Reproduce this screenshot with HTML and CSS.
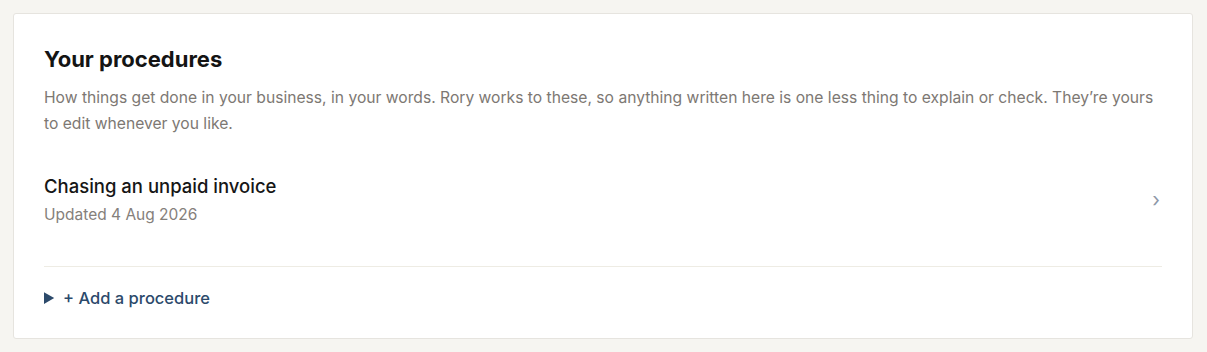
FILE: index.html
```html
<!DOCTYPE html>
<html lang="en">
<head>
  <meta charset="UTF-8">
  <title>Your procedures</title>
  <link rel="stylesheet" href="styles.css">
</head>
<body>

  <!-- Procedures card -->
  <section class="card">
    <h2>Your procedures</h2>
    <p class="intro">How things get done in your business, in your words. Rory works to these, so anything written here is one less thing to explain or check. They’re yours to edit whenever you like.</p>

    <a class="procedure" href="#">
      <div>
        <h3>Chasing an unpaid invoice</h3>
        <p>Updated 4 Aug 2026</p>
      </div>
      <span class="chevron">›</span>
    </a>

    <details class="add-procedure">
      <summary>+ Add a procedure</summary>
    </details>
  </section>

</body>
</html>
```

FILE: styles.css
```css
body {
  margin: 0;
  padding: 13px 14px 13px 13px;
  font-family: Inter, 'Noto Sans', sans-serif;
  background-color: #f6f5f1;
  color: #1a1a1a;
}

.card {
  background-color: #fff;
  border: 1px solid #e6e4df;
  border-radius: 3px;
  padding: 30px 30px 24px 30px;
  height: 326px;
  box-sizing: border-box;
}

.card h2 {
  margin: 0;
  font-size: 22px;
  font-weight: 700;
  line-height: 30px;
  color: #141414;
}

.intro {
  margin: 11px 0 0;
  font-size: 15.65px;
  line-height: 26px;
  color: #7d7873;
}

.procedure {
  display: flex;
  align-items: center;
  justify-content: space-between;
  padding: 36px 0 40px;
  border-bottom: 1px solid #eeece4;
  text-decoration: none;
}

.procedure h3 {
  margin: 0;
  font-size: 18.5px;
  font-weight: 500;
  line-height: 26px;
  color: #161616;
}

.procedure p {
  margin: 5px 0 0;
  font-size: 15.5px;
  line-height: 22px;
  color: #85807b;
}

.chevron {
  color: #8d97a8;
  font-size: 20px;
  margin-right: 2px;
}

.add-procedure {
  margin-top: 21px;
}

.add-procedure summary {
  font-size: 16.5px;
  font-weight: 500;
  line-height: 20px;
  color: #2c4a6b;
  cursor: pointer;
}

.add-procedure summary::marker {
  font-size: 18px;
}
```
